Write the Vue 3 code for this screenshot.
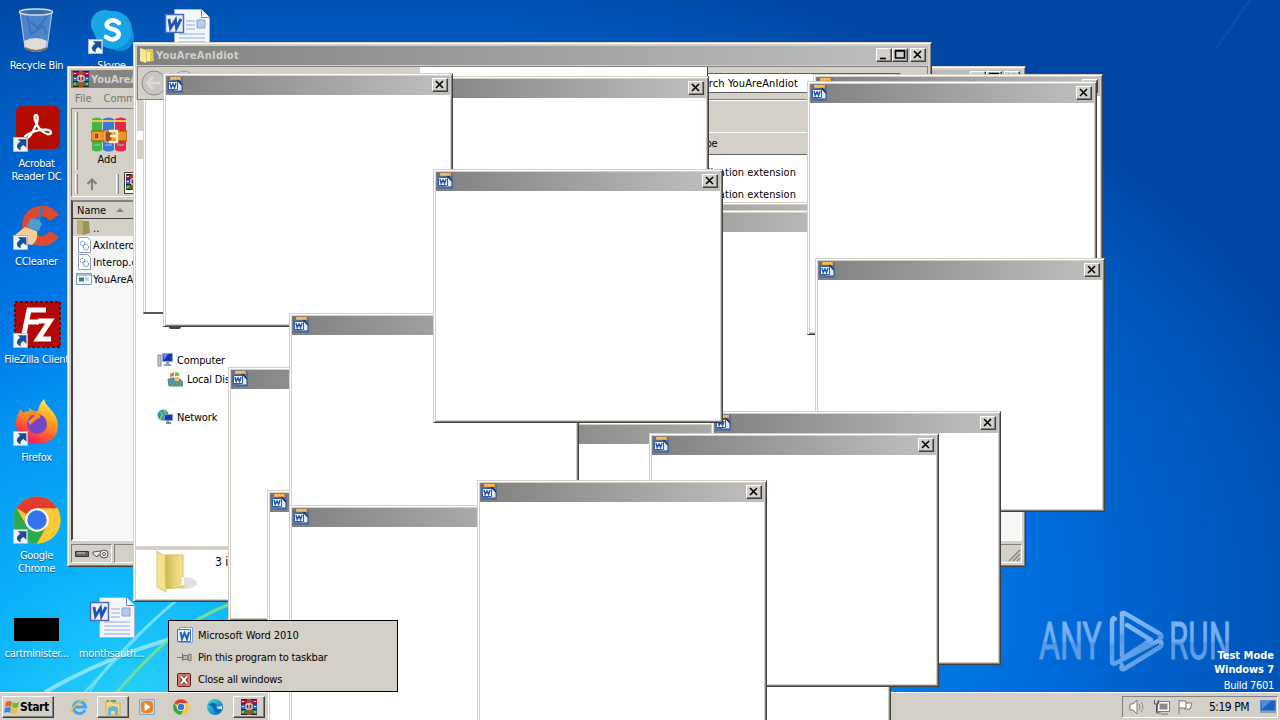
<script setup>
const desktopIcons = [
  { kind: 'bin', x: 0, y: 6, label: ['Recycle Bin'], link: false },
  { kind: 'skype', x: 75, y: 6, label: ['Skype'], link: true },
  { kind: 'doc', x: 150, y: 6, label: [''], link: false },
  { kind: 'acrobat', x: 0, y: 104, label: ['Acrobat', 'Reader DC'], link: true },
  { kind: 'ccleaner', x: 0, y: 202, label: ['CCleaner'], link: true },
  { kind: 'filezilla', x: 0, y: 300, label: ['FileZilla Client'], link: true },
  { kind: 'firefox', x: 0, y: 398, label: ['Firefox'], link: true },
  { kind: 'chrome', x: 0, y: 496, label: ['Google', 'Chrome'], link: true },
  { kind: 'black', x: 0, y: 594, label: ['cartminister...'], link: false },
  { kind: 'doc', x: 75, y: 594, label: ['monthsauth...'], link: false },
]
const popups = [
  [419, 76], [556, 202], [560, 210], [813, 74], [807, 81], [815, 258], [163, 73],
  [601, 520], [520, 422], [228, 367], [267, 490], [289, 313], [289, 505],
  [711, 411], [649, 433], [433, 169], [477, 480],
]
const files = [
  { kind: 'folder', name: '..' },
  { kind: 'dll', name: 'AxInterop.dll' },
  { kind: 'dll', name: 'Interop.dll' },
  { kind: 'exe', name: 'YouAreAnIdiot' },
]
</script>

<template>
  <div class="desktop">
    <svg class="defs" width="0" height="0">
      <defs>
        <linearGradient id="gEdge" x1="0" y1="0" x2="1" y2="1"><stop offset="0" stop-color="#4fd8a0" /><stop offset=".5" stop-color="#1fa3dc" /><stop offset="1" stop-color="#0c59a4" /></linearGradient>
        <linearGradient id="gFox" x1=".8" y1="0" x2=".3" y2="1"><stop offset="0" stop-color="#fff24a" /><stop offset=".4" stop-color="#ffa020" /><stop offset=".75" stop-color="#ff4a38" /><stop offset="1" stop-color="#e3147c" /></linearGradient>
        <linearGradient id="gFold" x1="0" y1="0" x2="1" y2="0"><stop offset="0" stop-color="#cfb352" /><stop offset=".5" stop-color="#e8d473" /><stop offset="1" stop-color="#f3e596" /></linearGradient>
        <linearGradient id="gMark" x1="0" y1="0" x2="0" y2="1"><stop offset="0" stop-color="#83b8f5" /><stop offset=".5" stop-color="#6faaf0" /><stop offset=".52" stop-color="#5797e2" /><stop offset="1" stop-color="#69a5ea" /></linearGradient>
        <symbol id="word" viewBox="0 0 16 16">
          <path d="M0 0h16v16H0z" fill="#5f7090" /><path d="M3 0h11v3H3z" fill="#f2a443" /><path d="M4 1h9" stroke="#ffe0a8" stroke-dasharray="2 1" />
          <path d="M6 4h5l4 4v6H6z" fill="#dceafa" stroke="#285296" /><path d="M10.500 3l4.500 5" stroke="#182848" stroke-width="1.300" />
          <path d="M1.500 4.500h9v8h-9z" fill="#f4f9ff" stroke="#2b5caa" /><path d="M3 6l1.200 4.500L6 7l1.600 3.500L9 6" fill="none" stroke="#1b55b5" stroke-width="1.500" />
        </symbol>
        <symbol id="rar" viewBox="0 0 16 16">
          <path d="M0 0h16v5H0z" fill="#b51c58" /><path d="M0 5h16v5H0z" fill="#2768c8" /><path d="M0 10h16v6H0z" fill="#258532" />
          <path d="M0 5h16M0 10.500h16M0 .5h16M0 15.500h16" stroke="#3c1622" /><path d="M1 2.500h2M1 7.500h2M1 13h2M13 2.500h2M13 7.500h2M13 13h2" stroke="#eee" />
          <path d="M6 0h4v16H6z" fill="#a8522d" /><path d="M5 5h6v5H5z" fill="#8b241c" stroke="#fff" /><path d="M8 4v5" stroke="#fff" />
        </symbol>
        <symbol id="chromeI" viewBox="0 0 48 48">
          <circle cx="24" cy="24" r="23.500" fill="#fcc934" /><path d="M24 24L3.600 12.300A23.500 23.500 0 0 1 44.400 12.300z" fill="#e33b2e" />
          <path d="M3.600 12.300A23.500 23.500 0 0 0 24 47.500L34.200 29.900 24 24 13.800 30z" fill="#2da94f" />
          <path d="M34.200 29.900L24 47.500A23.500 23.500 0 0 0 44.400 12.300H24z" fill="#fcc934" />
          <circle cx="24" cy="24" r="11.800" fill="#fff" /><circle cx="24" cy="24" r="9.700" fill="#3474e8" />
        </symbol>
        <symbol id="shortcut" viewBox="0 0 14 14"><path d="M.5.5h13v13H.5z" fill="#f4f8fc" stroke="#a9bdd2" /><path d="M4.500 2h8v8L9.800 7.500C7 9 6.500 10.500 7.500 12.500 2.500 11 2.500 7 6.800 4.500z" fill="#164f94" /></symbol>
        <symbol id="folderS" viewBox="0 0 16 16"><path d="M7 2h7l1 12-8 1z" fill="#e1c957" /><path d="M1 1l6 2v13l-6-2z" fill="#f6e993" /><path d="M8 5h3v9H8z" fill="#f8eeb0" /></symbol>
      </defs>
    </svg>

    <svg class="wall" width="1280" height="720">
      <g fill="none">
        <path d="M45 692C110 655 160 640 250 618" stroke="#c9f5ff" stroke-width="4" opacity=".6" />
        <path d="M85 692C125 650 155 615 190 590" stroke="#a6efff" stroke-width="3" opacity=".5" />
        <path d="M90 692C105 665 140 630 180 598" stroke="#8df0ff" stroke-width="2" opacity=".5" />
        <path d="M117 692C150 655 180 622 235 602" stroke="#7be08c" stroke-width="3" opacity=".9" />
        <path d="M1215 50L1250 0" stroke="#3f80d0" stroke-width="3" opacity=".15" />
      </g>
      <g fill="none" stroke="url(#gMark)" stroke-width="4.500" stroke-linejoin="round" stroke-linecap="round">
        <path d="M1115 619Q1112 617 1112 622V661Q1112 665 1116 663L1160 640Q1163 645 1160 647L1124 669Q1120 670 1122 665" />
        <path d="M1122 655V616Q1121 611 1126 614L1160 634Q1163 637 1160 638" /><path d="M1127 625L1151 640 1122 659" />
      </g>
      <g class="marktext" fill="url(#gMark)" stroke="url(#gMark)" stroke-width=".9">
        <text x="1039" y="659" textLength="63" lengthAdjust="spacingAndGlyphs">ANY</text>
        <text x="1169" y="659" textLength="62" lengthAdjust="spacingAndGlyphs">RUN</text>
      </g>
    </svg>

    <div v-for="(i, n) in desktopIcons" :key="n" class="dicon" :style="{ left: i.x + 'px', top: i.y + 'px' }">
      <svg width="48" height="48" viewBox="0 0 48 48">
        <g v-if="i.kind === 'bin'">
          <path d="M7 6l5 36q12 7 22 0l5-36z" fill="#7fa9dc" fill-opacity=".6" stroke="#b4cdea" /><path d="M15 14l10 8 9-12M14 10l4 18 12-8 4 8" stroke="#2a62ad" opacity=".5" fill="none" stroke-width="2" />
          <path d="M11 35q12-6 23 0l-1 7q-10 5-21 0z" fill="#dfddd9" /><ellipse cx="23" cy="6" rx="16.500" ry="3" fill="#3a6dad" stroke="#d0dded" stroke-width="1.500" /><path d="M12 42q11 6 22 0" fill="none" stroke="#75716b" stroke-width="2" />
        </g>
        <g v-else-if="i.kind === 'skype'">
          <circle cx="17" cy="18" r="14" fill="#22a6e3" /><circle cx="32" cy="31" r="14" fill="#0c8fd6" /><circle cx="25" cy="24" r="19" fill="#18a5e7" />
          <path d="M31 17q-6-5-11-1-4 5 4 7 9 2 6 8-5 5-12 0" fill="none" stroke="#fff" stroke-width="4.500" stroke-linecap="round" />
        </g>
        <g v-else-if="i.kind === 'doc'">
          <path d="M11.500 3.500h27l8 8v32h-35z" fill="#f4f7fd" stroke="#a4b5dd" /><path d="M38.500 3.500v8h8" fill="#fff" stroke="#6a86c8" />
          <path d="M23 15h9M23 19h9M23 23h9M16 28h26M16 32h26M16 36h26M16 40h26" stroke="#8ea9e0" /><path d="M34 14h8v8h-8z" fill="#b7cbf1" stroke="#86a1da" />
          <path d="M2.500 8.500h18v18h-18z" fill="#e9effc" stroke="#4a6cb8" stroke-width="1.500" /><path d="M6 13l1.500 9 5-8 1 8 4.500-9" fill="none" stroke="#2451b6" stroke-width="2.800" />
        </g>
        <g v-else-if="i.kind === 'acrobat'">
          <rect x="3" y="2" width="44" height="43" rx="6" fill="#b30b00" /><path d="M23 11C20 11 22 19 26 24c4 5 10 8 12 5 1-4-8-4-15-2-7 2-12 5-11 7 3 3 9-8 12-15 1-4 1-8-1-8z" fill="none" stroke="#fff" stroke-width="2.300" />
        </g>
        <g v-else-if="i.kind === 'ccleaner'">
          <path d="M46 13Q38 2 27 4 10 6 9 24 9 42 28 44 39 44 46 35L37 29Q33 34 27 34 19 33 19 24 20 15 28 14 34 15 37 19z" fill="#dd4a32" /><path d="M29 5L25 21" stroke="#3a7fae" stroke-width="3" /><path d="M17 17q8-2 12 5l-3 7-12-4z" fill="#4c9ed0" /><path d="M12 25l12 4c1 6-1 11-5 14-8-1-14-6-17-10z" fill="#efcf95" />
        </g>
        <g v-else-if="i.kind === 'filezilla'">
          <rect x="2" y="2" width="45" height="45" fill="#b40808" stroke="#700" stroke-width="2" stroke-dasharray="3 2" /><path d="M11 34L16 10H33M14 22H26M25 21H37L25 39H38" fill="none" stroke="#fff" stroke-width="5" />
        </g>
        <g v-else-if="i.kind === 'firefox'">
          <path d="M25 46C11 46 2 36 3 23c1-6 3-9 5-12l3 7 6-4-1-4c4 3 6 4 9 3 1-6 4-10 6-12 2 9 14 13 14 27 0 11-9 18-20 18z" fill="url(#gFox)" />
          <circle cx="24" cy="26" r="10" fill="#7447c6" /><path d="M8 18c8-6 14-2 19 0-5 0-7 5-11 7" fill="none" stroke="#ff8a24" stroke-width="4" />
        </g>
        <use v-else-if="i.kind === 'chrome'" href="#chromeI" />
        <rect v-else x="1" y="24" width="45" height="23" />
        <use v-if="i.link" href="#shortcut" x="0" y="33" width="15" height="15" />
      </svg>
      <span v-for="l in i.label" :key="l">{{ l }}</span>
    </div>

    <div class="build"><b>Test Mode</b><b>Windows 7</b><span>Build 7601</span></div>

    <section class="win rarwin">
      <header class="cap">
        <svg width="16" height="16"><use href="#rar" /></svg><b>YouAreAnIdiot</b>
        <i class="btn"><svg viewBox="0 0 16 14"><path d="M4 10.500h6" /></svg></i><i class="btn"><svg viewBox="0 0 16 14"><path d="M3.500 3h9v7h-9zM3 2.500h10" /></svg></i><i class="btn gap"><svg viewBox="0 0 16 14"><path d="M4 3l7 7M11 3l-7 7" /></svg></i>
      </header>
      <nav class="rmenu"><span>File</span><span>Commands</span></nav>
      <div class="rtools">
        <div class="r1"><i class="grip" /><div class="add">
          <svg width="36" height="36" viewBox="0 0 36 36"><path d="M1 2q5-3 10 0v31q-5 3-10 0z" fill="#43b744" /><path d="M12 2q6-3 11 0v31q-5 3-11 0z" fill="#3b78dc" /><path d="M24 2q6-3 11 0v31q-5 3-11 0z" fill="#e32943" /><path d="M1 4h10M12 4h11M24 4h11" stroke="#f2c649" stroke-width="2" /><path d="M3 28h6M14 28h7M26 28h7" stroke="#70dfe0" stroke-width="1" /><path d="M0 14h36v10H0z" fill="#ed9824" stroke="#974e17" /><path d="M4 16h4v6H4M14 14v11h7V14z" fill="#a04b19" stroke="#f6c36a" /><path d="M18 14h8v11h-8M25 19h-6" fill="none" stroke="#fff1c5" stroke-width="2.500" /></svg>
          <span>Add</span></div></div>
        <div class="r2"><i class="grip" /><svg width="14" height="14"><path d="M7 13V3M2.500 7L7 2.500 11.500 7" stroke="#808080" stroke-width="2" fill="none" /></svg><i class="grip g2" /><div class="sel"><svg width="16" height="16"><use href="#rar" /></svg></div></div>
      </div>
      <div class="rlist">
        <div class="rhead">Name<svg width="8" height="5"><path d="M0 4l4-4 4 4z" fill="#85827c" /></svg></div>
        <div v-for="f in files" :key="f.name" class="row" :class="f.kind">
          <svg width="16" height="16" viewBox="0 0 16 16">
            <g v-if="f.kind === 'folder'"><path d="M1 0h6v15l-6-1z" fill="#b9ae73" /><path d="M7 1h6l1 12-7 2z" fill="#9d925a" /></g>
            <g v-else-if="f.kind === 'dll'" fill="none"><path d="M2.500.5h9l3 3v12h-12z" fill="#fff" stroke="#8a9bb8" /><circle cx="6.500" cy="6.500" r="2.300" stroke="#4578b4" stroke-dasharray="1.500 .7" /><circle cx="10" cy="10" r="2.700" stroke="#4578b4" stroke-dasharray="1.500 .7" /></g>
            <g v-else><path d="M.5 2.500h15v11H.5z" fill="#f4faff" stroke="#7a9dbb" /><path d="M1 4h14" stroke="#a8c4dc" stroke-width="2" /><path d="M3 6.500h5v4H3z" fill="#32866e" /><path d="M9 7h4M9 9h4" stroke="#aaa" /></g>
          </svg><span>{{ f.name }}</span>
        </div>
      </div>
      <footer class="rstat"><div class="cell"><svg width="36" height="12"><path d="M2.500 3.500h13v5h-13z" fill="#5f6b64" stroke="#333" /><path d="M4 5h8" stroke="#cfd8d1" /><path d="M20 4l8-1v4h-3l-1 2-4-3z" fill="#eee" stroke="#555" /><circle cx="31" cy="6" r="4" fill="#eee" stroke="#555" /><circle cx="31" cy="6" r="1.500" fill="#fff" stroke="#555" /></svg></div><div class="cell wide"><svg width="13" height="13"><path d="M1 12L12 1M5 12l7-7M9 12l3-3" stroke="#808080" stroke-width="1.300" /></svg></div></footer>
    </section>

    <section class="win exp">
      <header class="cap">
        <svg width="16" height="16"><use href="#folderS" /></svg><b>YouAreAnIdiot</b>
        <i class="btn"><svg viewBox="0 0 16 14"><path d="M4 10.500h6" /></svg></i><i class="btn"><svg viewBox="0 0 16 14"><path d="M3.500 3h9v7h-9zM3 2.500h10" /></svg></i><i class="btn gap"><svg viewBox="0 0 16 14"><path d="M4 3l7 7M11 3l-7 7" /></svg></i>
      </header>
      <div class="addr">
        <svg width="60" height="34"><circle cx="16" cy="17" r="12" fill="#c9c6c2" stroke="#8c8a88" /><circle cx="46" cy="17" r="12" fill="#d4d2ce" stroke="#999" /><path d="M22 17H10M15 11l-6 6 6 6" stroke="#dedcda" stroke-width="2.500" fill="none" /></svg>
        <div class="abox" /><div class="search">Search YouAreAnIdiot</div>
      </div>
      <div class="ebody">
        <div class="side">
          <div class="stub" />
          <div class="nav">
            <div><svg width="16" height="16"><path d="M1 3h3v11H1z" fill="#c3c8d2" stroke="#848b98" /><path d="M5.500 1.500h10v8h-10z" fill="#1735c0" stroke="#96a7c4" /><path d="M6 2h5l-4 6z" fill="#6687ef" /><path d="M9 10h3v2h2v2H7v-2h2z" fill="#939fb5" /></svg>Computer</div>
            <div class="sub"><svg width="16" height="16"><path d="M1 8h12l3 3v4H2z" fill="#65929e" stroke="#496" /><path d="M3 3l4-2v4l-4 1z" fill="#e7793c" /><path d="M8 1l4 1v3H8z" fill="#82b843" /><path d="M3 7l4-1v4H3z" fill="#4e91d6" /><path d="M8 6h4v4H8z" fill="#efc943" /></svg>Local Disk</div>
            <div class="net"><svg width="16" height="16"><circle cx="6" cy="6" r="5.500" fill="#3489bd" /><path d="M2 3q4 0 3 4-2 2-1 4M7 1l2 4" stroke="#63c770" stroke-width="2" fill="none" /><path d="M7.500 5.500h8v6h-8z" fill="#1735c0" stroke="#8799c6" /><path d="M11 12v2H9h5" stroke="#7c8ba5" stroke-width="2" fill="none" /></svg>Network</div>
          </div>
        </div>
        <div class="main"><div class="ecmd" /><div class="ehead"><span>Type</span></div><div class="erow"><span>Application extension</span></div><div class="erow"><span>Application extension</span></div></div>
      </div>
      <div class="details"><svg width="42" height="46"><ellipse cx="28" cy="33" rx="13" ry="6" fill="#999" opacity=".3" /><path d="M9 5h18v24l1 8-19 2z" fill="url(#gFold)" stroke="#d6bf61" /><path d="M1 1l8 5v16l1 20-9-5z" fill="#f4e391" stroke="#dcc769" /><path d="M27 27v8" stroke="#fff" stroke-width="2" /></svg><span>3 items</span></div>
    </section>

    <footer class="taskbar">
      <div class="start"><svg width="16" height="16"><path d="M2 3q3-2 6 0L7 8Q4 6 1 8z" fill="#e9602c" /><path d="M9 3q3 2 6 0l-1 5q-3 2-6 0z" fill="#75b72d" /><path d="M1 9q3-2 6 0l-1 5q-3-2-6 0z" fill="#3e85d7" /><path d="M8 9q3 2 6 0l-1 5q-3 2-6 0z" fill="#f5bd29" /></svg><b>Start</b></div>
      <div class="tb"><svg width="18" height="18"><path d="M15 12A6 6 0 1 1 15.500 9H5" fill="none" stroke="#3fa9e5" stroke-width="3" /><path d="M1 15C2 8 12 0 17 2" fill="none" stroke="#f1c443" stroke-width="1.500" /></svg></div>
      <div class="tb up"><svg width="18" height="18"><path d="M2 3h6l1 2h7v12H2z" fill="#f1d981" stroke="#cfb04e" /><path d="M4 17V10q5-4 10 0v7h-3v-4H7v4z" fill="#62b5dd" /><path d="M3 3h2M7 3h5" stroke="#54a569" stroke-width="2" /></svg></div>
      <div class="tb"><svg width="16" height="16"><path d="M.5.500h15v15H.5z" fill="#b9d4ee" stroke="#7eaace" /><rect x="2" y="2" width="12" height="12" rx="4" fill="#f48120" /><path d="M6 4.500l5 3.500-5 3.500z" fill="#fff" stroke="#fff" /></svg></div>
      <div class="tb"><svg width="16" height="16"><use href="#chromeI" /></svg></div>
      <div class="tb"><svg width="16" height="16"><circle cx="8" cy="8" r="8" fill="url(#gEdge)" /><path d="M1 6q6-5 9 1-3 4 5 4-5 4-8 1-1-6-6-6" fill="#0d65b5" /><path d="M10 8q0 2 5 2V7z" fill="#e1f4f5" /></svg></div>
      <div class="tb up"><svg width="16" height="16"><use href="#rar" /></svg></div>
      <div class="tray">
        <svg width="18" height="16"><path d="M1 5h3l4-4v14l-4-4H1z" fill="#fff" stroke="#777" /><path d="M10 5q2 3 0 6M12 3q4 5 0 10" stroke="#888" fill="none" /></svg>
        <svg width="18" height="16"><path d="M5.500 3.500h10v8h-10z" fill="#888" stroke="#fff" stroke-width="2" /><path d="M4.500 2.500h12v10h-12zM8 15h7" fill="none" stroke="#777" /><path d="M1.500 1v4h4V1M3.500 5v9h4" stroke="#555" fill="none" /></svg>
        <svg width="18" height="16"><path d="M2 1v14M2 2h7v7H2M9 4h6l-2 6H7" fill="#fff" stroke="#777" /></svg>
        <span>5:19 PM</span>
        <svg class="desk" width="16" height="14"><path d="M.5.500h15v10H.5z" fill="#1c62c5" stroke="#5589c4" /><path d="M1 1h10L2 9z" fill="#4a91e3" /><path d="M0 12h16" stroke="#8f9eb1" stroke-width="2" /></svg>
      </div>
    </footer>

    <div class="ghost" />
    <div class="strip" />
    <div class="smudge" />
    <section v-for="(p, n) in popups" :key="'p' + n" class="win pop" :style="{ left: p[0] + 'px', top: p[1] + 'px' }">
      <header class="cap"><svg width="16" height="16"><use href="#word" /></svg><i class="btn gap"><svg viewBox="0 0 16 14"><path d="M4 3l7 7M11 3l-7 7" /></svg></i></header>
      <div class="blank" />
    </section>

    <div class="jump">
      <div><svg width="16" height="16"><path d="M2.500.5h13v15h-13z" fill="#fff" stroke="#7aa2d6" /><path d="M.5 2.500h13v12H.5z" fill="#e6f0fc" stroke="#3f74bd" /><path d="M3.500 5l1.500 7 2.500-6L10 12l2-7" stroke="#2360b8" stroke-width="2" fill="none" /></svg><span class="w1">Microsoft Word 2010</span></div>
      <div><svg width="16" height="16"><path d="M0 8.500h6M5.500 4v8M6 6.500h5v4H6zM11 6l3-1v7l-3-1z" fill="#bbb" stroke="#777" /></svg><span>Pin this program to taskbar</span></div>
      <div><svg class="x" width="16" height="16"><rect x="1.500" y="1.500" width="13" height="13" rx="1" fill="#d97a70" stroke="#6d1c18" /><path d="M5 4.500l6 7M11 4.500l-6 7" stroke="#521" stroke-width="4" /><path d="M5 4.500l6 7M11 4.500l-6 7" stroke="#fff" stroke-width="2.200" /></svg><span>Close all windows</span></div>
    </div>
  </div>
</template>

<style>
body { margin: 0; overflow: hidden; }
</style>

<style scoped>
.desktop { position: relative; width: 1280px; height: 720px; overflow: hidden; font: 11px/13px "DejaVu Sans Condensed", "DejaVu Sans", sans-serif; letter-spacing: -.3px; color: #000;
  background: radial-gradient(ellipse 520px 400px at 150px 720px, #2ad4fa 0%, rgba(12, 184, 250, .85) 40%, rgba(0, 150, 240, 0) 100%), radial-gradient(ellipse 1010px 660px at 380px 600px, #0092f4 0%, #0084f0 45%, #006cdc 66%, #0054b6 90%, #0046a2 100%); }
.defs { position: absolute; }
.wall { position: absolute; left: 0; top: 0; }
.marktext { font: 52px Roboto, sans-serif; font-weight: 400; letter-spacing: 0; }
.dicon { position: absolute; width: 73px; display: flex; flex-direction: column; align-items: center; color: #fff; text-shadow: 0 1px 1px rgba(0, 30, 80, .6); white-space: nowrap; }
.dicon svg { margin-bottom: 5px; }
.dicon span { line-height: 13px; }
.build { position: absolute; right: 6px; top: 649px; color: #fff; display: flex; flex-direction: column; align-items: flex-end; line-height: 14px; letter-spacing: 0; }
.build b + b { letter-spacing: -.1px; }
.build span { margin-top: 2px; letter-spacing: -.3px; }
.win { position: absolute; box-sizing: border-box; background: #d4d0c8; border: 1px solid; border-color: #d4d0c8 #404040 #404040 #d4d0c8; box-shadow: inset 1px 1px #fff, inset -1px -1px #808080; padding: 2px; display: flex; flex-direction: column; }
.cap { height: 19px; flex: none; box-sizing: border-box; display: flex; align-items: center; padding: 0 2px; background: linear-gradient(90deg, #808080, #c0c0c0); color: #d4d0c8; }
.cap b { flex: 1; margin-left: 1px; letter-spacing: .25px; }
.btn { width: 16px; height: 14px; box-sizing: border-box; background: #d4d0c8; border: 1px solid; border-color: #fff #404040 #404040 #fff; box-shadow: inset -1px -1px #808080; flex: none; }
.btn svg { display: block; width: 16px; height: 14px; margin: -1px; fill: none; stroke: #000; stroke-width: 1.6px; }
.btn.gap { margin-left: 2px; }
.pop { width: 290px; height: 254px; }
.pop .cap { padding: 0 2px 1px 1px; }
.pop .cap .btn.gap { margin: 0 0 0 auto; }
.blank { flex: 1; background: #fff; }
.ghost { position: absolute; left: 143px; top: 101px; width: 280px; height: 213px; box-sizing: border-box; background: #fff; border: 1px solid #d4d0c8; border-top: 0; border-bottom: 2px solid #555; box-shadow: inset 1px 0 #fff, inset 2px 0 #d4d0c8; }
.strip { position: absolute; left: 420px; top: 67px; width: 288px; height: 16px; box-sizing: border-box; background: #fffffb; border-right: 1px solid #404040; }
.smudge { position: absolute; left: 169px; top: 325px; width: 12px; height: 4px; border-radius: 2px; background: #444; }

.rarwin { left: 67px; top: 66px; width: 959px; height: 501px; }
.rarwin .cap { height: 18px; margin: 1px 1px 0; }
.rarwin .cap .btn { margin-bottom: 3px; }
.rarwin .cap b { margin-left: 2px; letter-spacing: 0; }
.rmenu { height: 20px; display: flex; gap: 12px; padding: 0 5px; align-items: center; color: #77736c; letter-spacing: 0; }
.rtools { height: 89px; margin: 0 1px; box-sizing: border-box; border: 1px solid #808080; border-color: #808080 #fff #fff #808080; }
.r1 { height: 62px; display: flex; }
.grip { width: 1px; margin: 3px 5px 1px 3px; border-left: 1px solid #fff; border-right: 1px solid #808080; }
.add { display: flex; flex-direction: column; align-items: center; margin: 8px 0 0 8px; letter-spacing: 0; }
.add span { margin-left: -4px; }
.r2 { height: 24px; display: flex; align-items: center; }
.r2 .grip { align-self: stretch; }
.r2 .grip + svg { margin-left: 2px; margin-top: 2px; }
.r2 .g2 { margin-left: 17px; }
.sel { border: 1px solid #444; background: #fff; height: 18px; padding: 1px; }
.rlist { flex: 1; margin: 3px 1px 0; border: 2px solid; border-color: #808080 #fff #fff #45404c; background: #f6f6f6; }
.rhead { height: 17px; background: #d4d0c8; border-bottom: 1px solid #404040; display: flex; align-items: center; padding-left: 4px; padding-top: 1px; box-sizing: border-box; letter-spacing: 0; gap: 10px; }
.row { height: 17px; display: flex; align-items: center; padding-left: 3px; gap: 1px; letter-spacing: 0; }
.row span { padding-top: 1px; }
.row.folder { background: #d4d0c8; }
.rstat { height: 23px; display: flex; gap: 2px; padding: 3px 1px 1px; align-items: stretch; box-sizing: border-box; }
.cell { width: 41px; border: 1px solid; border-color: #808080 #fff #fff #808080; display: flex; align-items: center; padding-left: 1px; box-sizing: border-box; }
.cell.wide { flex: 1; justify-content: flex-end; align-items: flex-end; }

.exp { left: 133px; top: 42px; width: 799px; height: 560px; }
.exp .cap { margin: 1px 1px 0; height: 19px; padding-bottom: 1px; }
.exp .cap svg { flex: none; }
.addr { height: 34px; display: flex; border: 1px solid #808080; margin: 1px 1px 0; box-sizing: border-box; overflow: hidden; background: #d4d0c8; }
.addr svg { flex: none; margin-top: -1px; }
.abox { width: 206px; margin: 6px 0 6px 13px; border-top: 2px solid #808080; background: #d4d0c8; }
.search { flex: 1; margin: 6px 26px 6px 0; border: 1px solid #606060; border-right-color: #eee; background: #fff; text-align: right; padding: 3px 102px 0 0; letter-spacing: .12px; }
.ebody { flex: 1; min-height: 0; display: flex; background: #fff; }
.side { width: 400px; margin-left: 1px; }
.stub { height: 59px; width: 6px; background: linear-gradient(#d4d0c8 0 31px, #fff 31px 40px, #d4d0c8 40px); }
.nav { padding: 193px 0 0 20px; }
.nav div { display: flex; align-items: center; gap: 4px; height: 16px; letter-spacing: -.15px; }
.nav .sub { margin: 3px 0 0 10px; }
.nav .net { margin-top: 22px; }
.main { flex: 1; }
.ecmd { height: 32px; background: #d4d0c8; border-top: 1px solid #fff; box-sizing: border-box; }
.ehead { height: 23px; background: #d4d0c8; border-top: 1px solid #fff; border-bottom: 1px solid #606060; box-sizing: border-box; line-height: 22px; padding-left: 159px; margin-bottom: 7px; }
.erow { height: 22px; line-height: 22px; width: 259px; text-align: right; letter-spacing: .05px; }
.details { height: 49px; border-top: 4px solid #d4d0c8; background: #fff; display: flex; padding-left: 20px; }
.details span { margin: 6px 0 0 17px; font-size: 12px; letter-spacing: 0; }

.taskbar { position: absolute; left: 0; top: 692px; width: 1280px; height: 28px; box-sizing: border-box; background: #d4d0c8; border-top: 1px solid #fff; display: flex; align-items: center; padding: 1px 2px 0; }
.start { width: 52px; height: 22px; box-sizing: border-box; border: 1px solid; border-color: #fff #404040 #404040 #fff; box-shadow: inset -1px -1px #808080; display: flex; align-items: center; padding-left: 1px; font-size: 12px; margin-right: 9px; letter-spacing: -.4px; }
.tb { width: 32px; height: 22px; box-sizing: border-box; display: flex; align-items: center; justify-content: center; border: 1px solid transparent; margin-right: 2px; flex: none; }
.tb.up { border-color: #fff #404040 #404040 #fff; box-shadow: inset -1px -1px #808080; }
.tray { margin-left: auto; width: 156px; height: 22px; box-sizing: border-box; border: 1px solid; border-color: #808080 #fff #fff #808080; display: flex; align-items: center; padding-left: 6px; gap: 6px; font-size: 12px; }
.tray span { margin-left: 8px; white-space: nowrap; letter-spacing: -.5px; }
.desk { margin-left: 5px; }
.jump { position: absolute; left: 168px; top: 620px; width: 230px; height: 72px; box-sizing: border-box; border: 1px solid #000; background: #d4d0c8; padding: 3px 8px 0; display: flex; flex-direction: column; letter-spacing: -.2px; }
.jump div { height: 22.500px; display: flex; align-items: center; gap: 5px; }
.jump .x { margin: 0 1px 0 -1px; }
.jump .w1 { letter-spacing: -.05px; }
</style>
